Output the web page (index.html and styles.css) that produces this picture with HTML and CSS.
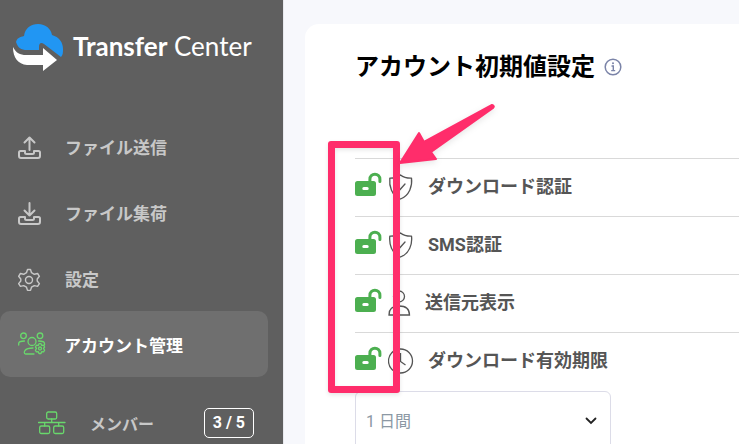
FILE: index.html
```html
<!DOCTYPE html>
<html lang="ja">
<head>
    <meta charset="UTF-8">
    <meta name="viewport" content="width=device-width, initial-scale=1.0">
    <title>アカウント初期値設定 - Transfer Center</title>
    <link rel="stylesheet" href="styles.css">
</head>
<body>
    <!-- shared icons -->
    <svg class="sprite" aria-hidden="true">
        <symbol id="unlock" viewBox="0 0 28 26">
            <path d="M14.900 10V7.200a5 5 0 0 1 10 0V9.500" fill="none" stroke="#4caf50" stroke-width="3" stroke-linecap="round"/>
            <path fill-rule="evenodd" fill="#4caf50" d="M2.500 9H18.500A2.500 2.500 0 0 1 21 11.500V21.500A2.500 2.500 0 0 1 18.500 24H2.500A2.500 2.500 0 0 1 0 21.500V11.500A2.500 2.500 0 0 1 2.500 9ZM8.800 15a1.500 1.500 0 0 0 0 3h3.400a1.500 1.500 0 0 0 0-3Z"/>
        </symbol>
        <symbol id="shield" viewBox="0 0 26 26">
            <path d="M12.500 1C9.500 3.500 5.500 4.300 1.800 4.200 1 12 3.500 21.500 12.500 25 21.500 21.500 24.500 12 23.500 4.200 19.500 4.300 15.500 3.500 12.500 1ZM8 13.500l3 3.200 6-6.700" fill="none" stroke="#555" stroke-width="1.300" stroke-linecap="round" stroke-linejoin="round"/>
        </symbol>
    </svg>

    <div class="layout">
        <aside class="sidebar">
            <a class="logo" href="#">
                <svg width="52" height="50" viewBox="0 0 52 50">
                    <path fill="#2196f3" d="M3 18C4 14 7 13 11 12 12 4 18 0 25 0 33 0 38 5 39 11 46 13 50 18 50 25 50 28 50 31 48 33L31 20C28 18 26 19 26 23V26H14C8 26 5 24 3 18Z"/>
                    <path fill="#fff" d="M0 23C3 29 7 31 13 31H30V24L44 36 30 47V41H14C5 40 0 34 0 23Z"/>
                </svg>
                <span class="logo-text"><strong>Transfer</strong> Center</span>
            </a>
            <nav class="menu">
                <a class="menu-item" href="#">
                    <svg width="24" height="24" viewBox="0 0 24 24" class="icon-light">
                        <path d="M11.500 14V2M6.500 6.500l5-5 5 5M7 15H2.500A1.500 1.500 0 0 0 1 16.500V20a2 2 0 0 0 2 2H20a2 2 0 0 0 2-2V16.500A1.500 1.500 0 0 0 20.500 15H16v1.500A1.500 1.500 0 0 1 14.500 18H8.500A1.500 1.500 0 0 1 7 16.500Z"/>
                    </svg>
                    <span>ファイル送信</span>
                </a>
                <a class="menu-item" href="#">
                    <svg width="24" height="24" viewBox="0 0 24 24" class="icon-light">
                        <path d="M11.500 1V13.500M6.500 8.500l5 5 5-5M7 15H2.500A1.500 1.500 0 0 0 1 16.500V20a2 2 0 0 0 2 2H20a2 2 0 0 0 2-2V16.500A1.500 1.500 0 0 0 20.500 15H16v1.500A1.500 1.500 0 0 1 14.500 18H8.500A1.500 1.500 0 0 1 7 16.500Z"/>
                    </svg>
                    <span>ファイル集荷</span>
                </a>
                <a class="menu-item" href="#">
                    <svg width="24" height="24" viewBox="0 0 24 24" class="icon-light thin">
                        <path d="M9.500 1.500h3l1 3.200 2.800 1.600 3.300-.8 1.800 2.800L19.200 11v2l2.200 2.600-1.800 2.800-3.300-.8-2.800 1.600-1 3.200h-3l-1-3.200-2.800-1.600-3.300.8L.600 15.600 2.800 13V11L.600 8.300l1.800-2.800 3.300.8 2.800-1.600Z"/>
                        <circle cx="11" cy="12" r="3.500"/>
                    </svg>
                    <span>設定</span>
                </a>
                <a class="menu-item active" href="#">
                    <svg width="28" height="24" viewBox="0 0 28 24" class="icon-green">
                        <circle cx="5.500" cy="3.800" r="2.800"/>
                        <circle cx="22" cy="3.800" r="2.800"/>
                        <circle cx="14" cy="9.500" r="4"/>
                        <path d="M.700 13V11.500C.700 9.500 2.500 9 6.500 9M26.500 13V11.500C26.500 9.500 25 9 20.500 9M16 22H7.500C6 22 6 20 7 18.500 8.500 16.500 11 16 15 16"/>
                        <path d="M21 11.700h2l.7 1.700 1.900-.2 1 1.800-1.100 1.500 1.100 1.600-1 1.800-1.900-.2-.7 1.800h-2l-.7-1.800-1.900.2-1-1.800 1.100-1.600-1.100-1.500 1-1.800 1.900.2Z"/>
                        <circle cx="22" cy="16.500" r="1.500"/>
                    </svg>
                    <span>アカウント管理</span>
                </a>
                <a class="menu-item sub" href="#">
                    <svg width="28" height="24" viewBox="0 0 28 24" class="icon-green">
                        <rect x="8.700" y="1" width="10" height="7" rx="1.500"/>
                        <rect x="1.700" y="15" width="10" height="7.500" rx="1.500"/>
                        <rect x="15.700" y="15" width="10" height="7.500" rx="1.500"/>
                        <path d="M.500 11.500H27M13.700 8v3.500M6.700 11.500V15M20.700 11.500V15"/>
                    </svg>
                    <span>メンバー</span>
                    <span class="count">3 / 5</span>
                </a>
            </nav>
        </aside>

        <main class="main">
            <section class="card">
                <h1 class="title">
                    アカウント初期値設定
                    <svg width="18" height="18" viewBox="0 0 18 18">
                        <circle cx="9" cy="9" r="7.800" fill="none" stroke="#7b84a8" stroke-width="1.500"/>
                        <path d="M7.500 8H9.300V12.500M7.200 12.600h4" fill="none" stroke="#7b84a8" stroke-width="1.400"/>
                        <circle cx="9" cy="5.300" r="1" fill="#7b84a8"/>
                    </svg>
                </h1>
                <div class="settings">
                    <div class="row">
                        <svg class="lock" width="28" height="26"><use href="#unlock"/></svg>
                        <svg class="row-icon" width="26" height="26"><use href="#shield"/></svg>
                        <span class="row-label">ダウンロード認証</span>
                    </div>
                    <div class="row">
                        <svg class="lock" width="28" height="26"><use href="#unlock"/></svg>
                        <svg class="row-icon" width="26" height="26"><use href="#shield"/></svg>
                        <span class="row-label">SMS認証</span>
                    </div>
                    <div class="row">
                        <svg class="lock" width="28" height="26"><use href="#unlock"/></svg>
                        <svg class="row-icon" width="23" height="26" viewBox="0 0 23 26">
                            <circle cx="11" cy="6.500" r="5.500"/>
                            <path d="M1 25C1 19 4 16 11 16S21.500 19 21.500 25Z"/>
                        </svg>
                        <span class="row-label">送信元表示</span>
                    </div>
                    <div class="row">
                        <svg class="lock" width="28" height="26"><use href="#unlock"/></svg>
                        <svg class="row-icon" width="26" height="26" viewBox="0 0 26 26">
                            <circle cx="12.500" cy="13" r="12"/>
                            <path d="M12.500 5V13.500L17.500 17"/>
                        </svg>
                        <label class="row-label" for="period">ダウンロード有効期限</label>
                    </div>
                    <div class="select-box">
                        <select id="period">
                            <option>1 日間</option>
                        </select>
                        <svg class="chevron" width="12" height="8" viewBox="0 0 12 8">
                            <path d="M1.500 1.500L6 6l4.500-4.500" fill="none" stroke="#222" stroke-width="1.800" stroke-linecap="round"/>
                        </svg>
                    </div>
                    <!-- callout around the lock icons -->
                    <div class="callout"></div>
                    <svg class="arrow" width="100" height="66" viewBox="0 0 100 66">
                        <path fill="#ff2d6b" stroke="#ff2d6b" stroke-width="2" stroke-linejoin="round" d="M2 61L21 31 26 40 94 3Q97 4 95 6L33 50 38 57Z"/>
                    </svg>
                </div>
            </section>
        </main>
    </div>
</body>
</html>
```
FILE: styles.css
```css
* {
    box-sizing: border-box;
}
body {
    margin: 0;
    font-family: Roboto, "Noto Sans CJK JP", sans-serif;
    background-color: #f7f8fc;
}
.sprite {
    display: none;
}
.layout {
    display: flex;
    height: 100vh;
    overflow: hidden;
}
svg {
    flex-shrink: 0;
}

/* sidebar */
.sidebar {
    flex: 0 0 283px;
    background-color: #5f5f5f;
}
.logo {
    display: flex;
    gap: 8px;
    height: 113px;
    padding: 24px 0 0 13px;
    color: #fff;
    text-decoration: none;
}
.logo-text {
    font-family: Lato, sans-serif;
    font-size: 26px;
    line-height: 44px;
}
.menu-item {
    display: flex;
    align-items: center;
    height: 66px;
    margin-right: 15px;
    padding-left: 18px;
    color: #c8c8c8;
    font-size: 17px;
    font-weight: bold;
    text-decoration: none;
}
.menu-item svg {
    margin-right: 18px;
    fill: none;
    stroke-linecap: round;
    stroke-linejoin: round;
}
.menu-item .icon-light {
    margin-top: 3px;
    margin-right: 23px;
    stroke: #c8c8c8;
    stroke-width: 2;
}
.menu-item .thin {
    stroke-width: 1.4;
}
.icon-green {
    stroke: #69d86c;
    stroke-width: 1.3;
}
.active {
    background-color: #6f6f6f;
    border-radius: 10px;
    color: #fff;
}
.sub {
    height: 92px;
    padding-left: 38px;
    font-size: 16px;
}
.menu-item.sub svg {
    margin-right: 24px;
}
.count {
    margin-left: auto;
    margin-right: 14px;
    padding: 0 8px;
    border: 1px solid #fff;
    border-radius: 5px;
    color: #fff;
    line-height: 28px;
}

/* settings */
.main {
    flex: 1;
    padding: 24px 0 0 21px;
    border-left: 1px solid #e8e9ee;
}
.card {
    height: 100%;
    padding: 22px 0 0 50px;
    border-radius: 14px 0 0 0;
    background-color: #fff;
}
.title {
    display: flex;
    align-items: center;
    gap: 9px;
    height: 36px;
    margin: 0 0 76px;
    font-size: 24px;
}
.title svg {
    margin-top: 5px;
}
.settings {
    position: relative;
}
.row {
    display: flex;
    align-items: center;
    height: 58px;
    padding-bottom: 2px;
    border-top: 1px solid #d9d9d9;
    color: #555;
    font-size: 18px;
    font-weight: bold;
}
.row-label {
    padding-bottom: 3px;
}
.lock {
    margin-right: 5px;
    margin-bottom: 4px;
}
.row-icon {
    margin-right: 14px;
    fill: none;
    stroke: #555;
    stroke-width: 1.3;
}
.select-box {
    position: relative;
    width: 256px;
    margin-top: 1px;
}
select {
    width: 100%;
    height: 60px;
    padding: 0 10px;
    border: 1px solid #dcdce8;
    border-radius: 6px;
    appearance: none;
    background-color: #fff;
    color: #8c98a4;
    font-family: inherit;
    font-size: 16px;
}
.chevron {
    position: absolute;
    top: 26px;
    right: 14px;
    pointer-events: none;
}
.callout {
    position: absolute;
    top: -17px;
    left: -27px;
    width: 72px;
    height: 252px;
    border: 7px solid #ff2d6b;
    border-radius: 3px;
    box-shadow: 0 2px 4px rgba(0, 0, 0, 0.1), inset 0 2px 4px rgba(0, 0, 0, 0.1);
}
.arrow {
    position: absolute;
    top: -56px;
    left: 43px;
    filter: drop-shadow(0 2px 3px rgba(0, 0, 0, 0.1));
}
```
